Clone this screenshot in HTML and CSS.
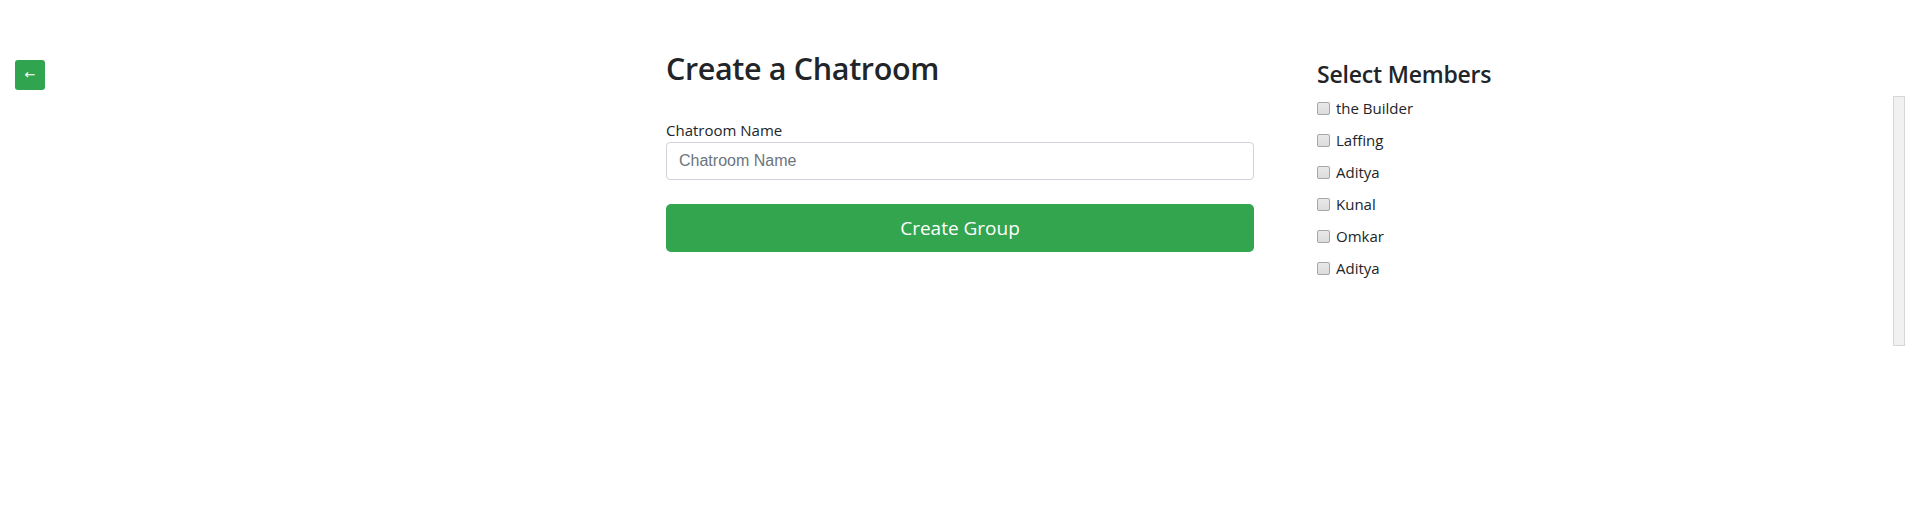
FILE: index.html
```html
<!DOCTYPE html>
<html lang="en">
<head>
<meta charset="utf-8">
<title>Create a Chatroom</title>
<link rel="stylesheet" href="styles.css">
</head>
<body>
<div class="page">
  <div class="left-col">
    <button class="back-btn" type="button">←</button>
  </div>
  <main class="form-col">
    <h2 class="title">Create a Chatroom</h2>
    <form class="create-form">
      <label class="field-label" for="roomName">Chatroom Name</label>
      <input class="field-input" id="roomName" type="text" placeholder="Chatroom Name">
      <button class="create-btn" type="button">Create Group</button>
    </form>
  </main>
  <aside class="members-col">
    <h4 class="members-title">Select Members</h4>
    <div class="member"><input type="checkbox" class="cb" id="m1"><label for="m1">the Builder</label></div>
    <div class="member"><input type="checkbox" class="cb" id="m2"><label for="m2">Laffing</label></div>
    <div class="member"><input type="checkbox" class="cb" id="m3"><label for="m3">Aditya</label></div>
    <div class="member"><input type="checkbox" class="cb" id="m4"><label for="m4">Kunal</label></div>
    <div class="member"><input type="checkbox" class="cb" id="m5"><label for="m5">Omkar</label></div>
    <div class="member"><input type="checkbox" class="cb" id="m6"><label for="m6">Aditya</label></div>
  </aside>
  <div class="side-scroll"></div>
</div>
</body>
</html>
```
FILE: styles.css
```css
* { box-sizing: border-box; }
html, body {
  margin: 0;
  padding: 0;
  background: #fff;
}
body {
  font-family: "Open Sans", "Noto Sans", sans-serif;
  color: #212529;
  font-size: 16px;
  line-height: 1.5;
}
.page {
  display: flex;
  align-items: flex-start;
  width: 1909px;
  height: 507px;
}
.left-col {
  width: 666px;
  flex: none;
  padding: 60px 0 0 15px;
}
.back-btn {
  width: 30px;
  height: 30px;
  padding: 0;
  border: none;
  border-radius: 3px;
  background: #31a44f;
  color: #fff;
  font-family: "DejaVu Sans", sans-serif;
  font-size: 13px;
  line-height: 30px;
}
.form-col {
  width: 588px;
  flex: none;
  padding-top: 50px;
}
.title {
  margin: 0 0 31px;
  font-size: 30.5px;
  font-weight: 600;
  line-height: 1.2;
  letter-spacing: -0.35px;
}
.create-form {
  display: flex;
  flex-direction: column;
}
.field-label {
  font-size: 15px;
  line-height: 24px;
  height: 24px;
}
.field-input {
  height: 38px;
  width: 100%;
  border: 1px solid #ced4da;
  border-radius: 4px;
  padding: 6px 12px;
  font-family: "Liberation Sans", Arial, sans-serif;
  font-size: 16px;
  color: #495057;
  margin: 0;
}
.field-input::placeholder { color: #6c757d; }
.create-btn {
  margin-top: 24px;
  height: 48px;
  width: 100%;
  border: none;
  border-radius: 5px;
  background: #33a54f;
  color: #fff;
  font-family: "Open Sans", sans-serif;
  font-size: 19px;
}
.members-col {
  margin-left: 63px;
  width: 300px;
  flex: none;
  padding-top: 61px;
}
.members-title {
  margin: 0 0 8px;
  font-size: 23px;
  font-weight: 600;
  line-height: 1.2;
  letter-spacing: -0.2px;
}
.member {
  display: flex;
  align-items: center;
  height: 24px;
  margin-bottom: 8px;
  font-size: 15px;
}
.cb {
  appearance: none;
  -webkit-appearance: none;
  width: 13px;
  height: 13px;
  margin: 0 6px 0 0;
  border: 1px solid #a6a6a6;
  border-radius: 2px;
  background: linear-gradient(#e9e9e9, #dcdcdc);
}
.side-scroll {
  margin-left: auto;
  margin-right: 4px;
  margin-top: 96px;
  width: 12px;
  height: 250px;
  border: 1px solid #d6d6d6;
  background: #f1f1f1;
  flex: none;
}
```
